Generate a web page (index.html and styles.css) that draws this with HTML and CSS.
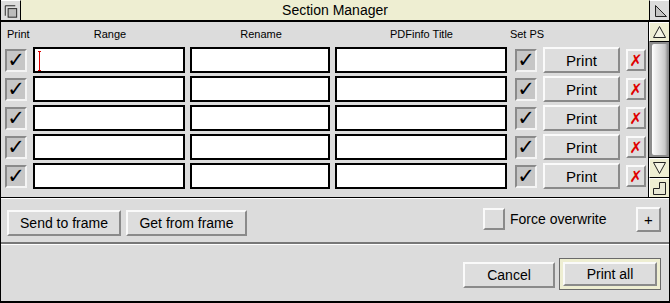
FILE: index.html
```html
<!DOCTYPE html>
<html>
<head>
<meta charset="utf-8">
<link rel="stylesheet" href="styles.css">
</head>
<body>
<div class="window">
  <div class="titlebar">
    <div class="tb-icon back">
      <svg width="20" height="20" viewBox="0 0 20 20"><path d="M4.5 15V4.5H15" fill="none" stroke="#222" stroke-width="1"/><rect x="7.5" y="7.5" width="9" height="9" fill="#bcbcbc" stroke="#222"/></svg>
    </div>
    <div class="title">Section Manager</div>
    <div class="tb-icon toggle">
      <svg width="20" height="20" viewBox="0 0 20 20"><path d="M5.5 4.5V15.5H16.5Z" fill="#c4c4c4" stroke="#222"/></svg>
    </div>
  </div>
  <div class="main">
    <div class="pane">
      <div class="row header">
        <div class="h-print">Print</div>
        <div class="h-range">Range</div>
        <div class="h-rename">Rename</div>
        <div class="h-pdf">PDFinfo Title</div>
        <div class="h-setps">Set PS</div>
      </div>
      <div class="row">
        <div class="check on first">✓</div>
        <div class="field range"><svg class="caret" width="5" height="20" viewBox="0 0 5 20"><path d="M1 0.5H4M2.5 0.5V19.5M1 19.5H4" stroke="#e00000" stroke-width="1" fill="none"/></svg></div>
        <div class="field rename"></div>
        <div class="field pdf"></div>
        <div class="check on setps">✓</div>
        <div class="btn print">Print</div>
        <div class="btn xbtn">✗</div>
      </div>
      <div class="row">
        <div class="check on first">✓</div>
        <div class="field range"></div>
        <div class="field rename"></div>
        <div class="field pdf"></div>
        <div class="check on setps">✓</div>
        <div class="btn print">Print</div>
        <div class="btn xbtn">✗</div>
      </div>
      <div class="row">
        <div class="check on first">✓</div>
        <div class="field range"></div>
        <div class="field rename"></div>
        <div class="field pdf"></div>
        <div class="check on setps">✓</div>
        <div class="btn print">Print</div>
        <div class="btn xbtn">✗</div>
      </div>
      <div class="row">
        <div class="check on first">✓</div>
        <div class="field range"></div>
        <div class="field rename"></div>
        <div class="field pdf"></div>
        <div class="check on setps">✓</div>
        <div class="btn print">Print</div>
        <div class="btn xbtn">✗</div>
      </div>
      <div class="row">
        <div class="check on first">✓</div>
        <div class="field range"></div>
        <div class="field rename"></div>
        <div class="field pdf"></div>
        <div class="check on setps">✓</div>
        <div class="btn print">Print</div>
        <div class="btn xbtn">✗</div>
      </div>
    </div>
    <div class="scrollbar">
      <div class="sb-btn up"><svg width="19" height="18" viewBox="0 0 19 18"><path d="M9.5 3.5L3.5 14.5H15.5Z" fill="#f4f4e4" stroke="#222"/></svg></div>
      <div class="sb-well"><div class="sb-thumb"></div></div>
      <div class="sb-btn down"><svg width="19" height="18" viewBox="0 0 19 18"><path d="M3.5 3.5H15.5L9.5 14.5Z" fill="#f4f4e4" stroke="#222"/></svg></div>
      <div class="sb-btn resize"><svg width="19" height="18" viewBox="0 0 19 18"><path d="M9.5 3.5H15.5V15.5H3.5V9.5H9.5Z" fill="#e8e8d4" stroke="#222"/></svg></div>
    </div>
  </div>
  <div class="toolbar">
    <div class="tool-top">
      <div class="btn tbtn send">Send to frame</div>
      <div class="btn tbtn get">Get from frame</div>
      <div class="spacer"></div>
      <div class="option"></div>
      <div class="opt-label">Force overwrite</div>
      <div class="btn plus">+</div>
    </div>
    <div class="tool-bottom">
      <div class="btn tbtn cancel">Cancel</div>
      <div class="default-wrap"><div class="btn tbtn printall">Print all</div></div>
    </div>
  </div>
</div>
</body>
</html>
```
FILE: styles.css
```css
* { box-sizing: border-box; }
body {
  margin: 0;
  font-family: "Liberation Sans", Arial, sans-serif;
  background: #fff;
}
.window {
  width: 670px;
  height: 303px;
  display: flex;
  flex-direction: column;
  background: #dcdcdc;
  border-left: 1px solid #000;
  border-right: 1px solid #000;
  border-bottom: 2px solid #000;
  overflow: hidden;
}
.titlebar {
  height: 22px;
  display: flex;
  border-bottom: 2px solid #000;
  background: #eeeed2;
  margin-left: -1px;
  margin-right: -1px;
}
.tb-icon {
  width: 21px;
  height: 20px;
  background: #dcdcdc;
  border-top: 1px solid #fff;
  border-left: 1px solid #fff;
  display: flex;
  align-items: center;
  justify-content: center;
}
.tb-icon.back { border-right: 1px solid #000; }
.tb-icon.toggle { border-left: 1px solid #000; width: 21px; }
.title {
  flex: 1;
  text-align: center;
  font-size: 14px;
  line-height: 20px;
  color: #000;
}
.main {
  height: 176px;
  display: flex;
  border-bottom: 1px solid #000;
}
.pane {
  flex: 1;
  display: flex;
  flex-direction: column;
  gap: 3px;
}
.row {
  display: flex;
  align-items: center;
  height: 26px;
}
.row.header {
  height: 22px;
  font-size: 11px;
  align-items: center;
  padding-top: 2px;
  margin-bottom: 0;
}
.h-print { margin-left: 6px; width: 28px; }
.h-range { width: 152px; text-align: center; margin-left: -1px; }
.h-rename { width: 140px; margin-left: 5px; text-align: center; }
.h-pdf { width: 172px; margin-left: 5px; padding-left: 54px; }
.h-setps { margin-left: 1px; width: 36px; text-align: center; }

.check {
  width: 22px;
  height: 23px;
  background: #c6c6c6;
  border-top: 2px solid #8a8a8a;
  border-left: 2px solid #8a8a8a;
  border-bottom: 2px solid #f4f4f4;
  border-right: 2px solid #f4f4f4;
  font-family: "DejaVu Sans", sans-serif;
  font-size: 21px;
  line-height: 19px;
  text-align: center;
  color: #000;
  overflow: hidden;
}
.check.first { margin-left: 4px; }
.check.setps { margin-left: 8px; }
.field {
  height: 26px;
  background: #fff;
  border: 2px solid #000;
  position: relative;
}
.field.range { width: 152px; margin-left: 6px; }
.field.rename { width: 140px; margin-left: 5px; }
.field.pdf { width: 172px; margin-left: 5px; }
.caret { position: absolute; left: 2px; top: 2px; }
.btn {
  background: #dddddd;
  border-top: 2px solid #fafafa;
  border-left: 2px solid #fafafa;
  border-bottom: 2px solid #8a8a8a;
  border-right: 2px solid #8a8a8a;
  color: #000;
  display: flex;
  align-items: center;
  justify-content: center;
}
.btn.print {
  width: 77px;
  height: 26px;
  margin-left: 6px;
  font-size: 15px;
}
.btn.xbtn {
  width: 20px;
  height: 22px;
  margin-left: 6px;
  color: #e00000;
  font-family: "DejaVu Sans", sans-serif;
  font-size: 16px;
  font-weight: bold;
}
.scrollbar {
  width: 21px;
  border-left: 1px solid #000;
  display: flex;
  flex-direction: column;
}
.sb-btn {
  height: 20px;
  background: #eeeed2;
  border-top: 1px solid #fff;
  border-left: 1px solid #fff;
  border-bottom: 1px solid #000;
  display: flex;
  align-items: center;
  justify-content: center;
}
.sb-btn.resize { border-bottom: none; height: 19px; }
.sb-well {
  height: 116px;
  background: #8c8c8c;
  border-bottom: 1px solid #000;
  padding: 2px 1px 2px 3px;
}
.sb-thumb {
  height: 100%;
  background: linear-gradient(to right, #ffffff 0, #f0f0f0 3px, #dadada 9px, #c8c8c8 13px, #8a8a8a 100%);
  border-radius: 2px;
}
.toolbar {
  flex: 1;
  display: flex;
  flex-direction: column;
}
.tool-top {
  height: 46px;
  border-top: 1px solid #fff;
  border-bottom: 2px solid #777;
  display: flex;
  align-items: flex-start;
  padding: 11px 8px 0 6px;
}
.tbtn {
  height: 26px;
  font-size: 14px;
}
.tbtn.send { width: 114px; }
.tbtn.get { width: 121px; margin-left: 5px; }
.spacer { flex: 1; }
.option {
  width: 22px;
  height: 22px;
  margin-top: -2px;
  background: #dddddd;
  border-top: 2px solid #fafafa;
  border-left: 2px solid #fafafa;
  border-bottom: 2px solid #8a8a8a;
  border-right: 2px solid #8a8a8a;
}
.opt-label {
  font-size: 14px;
  margin-left: 5px;
  margin-top: 0;
  line-height: 18px;
  width: 126px;
}
.btn.plus {
  width: 25px;
  height: 25px;
  margin-top: -3px;
  font-size: 15px;
}
.tool-bottom {
  flex: 1;
  border-top: 1px solid #fff;
  display: flex;
  justify-content: flex-end;
  align-items: flex-start;
  padding: 13px 8px 0 0;
}
.tbtn.cancel { width: 92px; margin-top: 4px; }
.default-wrap {
  margin-left: 4px;
  width: 102px;
  height: 32px;
  border: 1px solid #6a6a6a;
  background: #eeeed2;
  padding: 3px;
}
.tbtn.printall { width: 100%; height: 100%; }
```
